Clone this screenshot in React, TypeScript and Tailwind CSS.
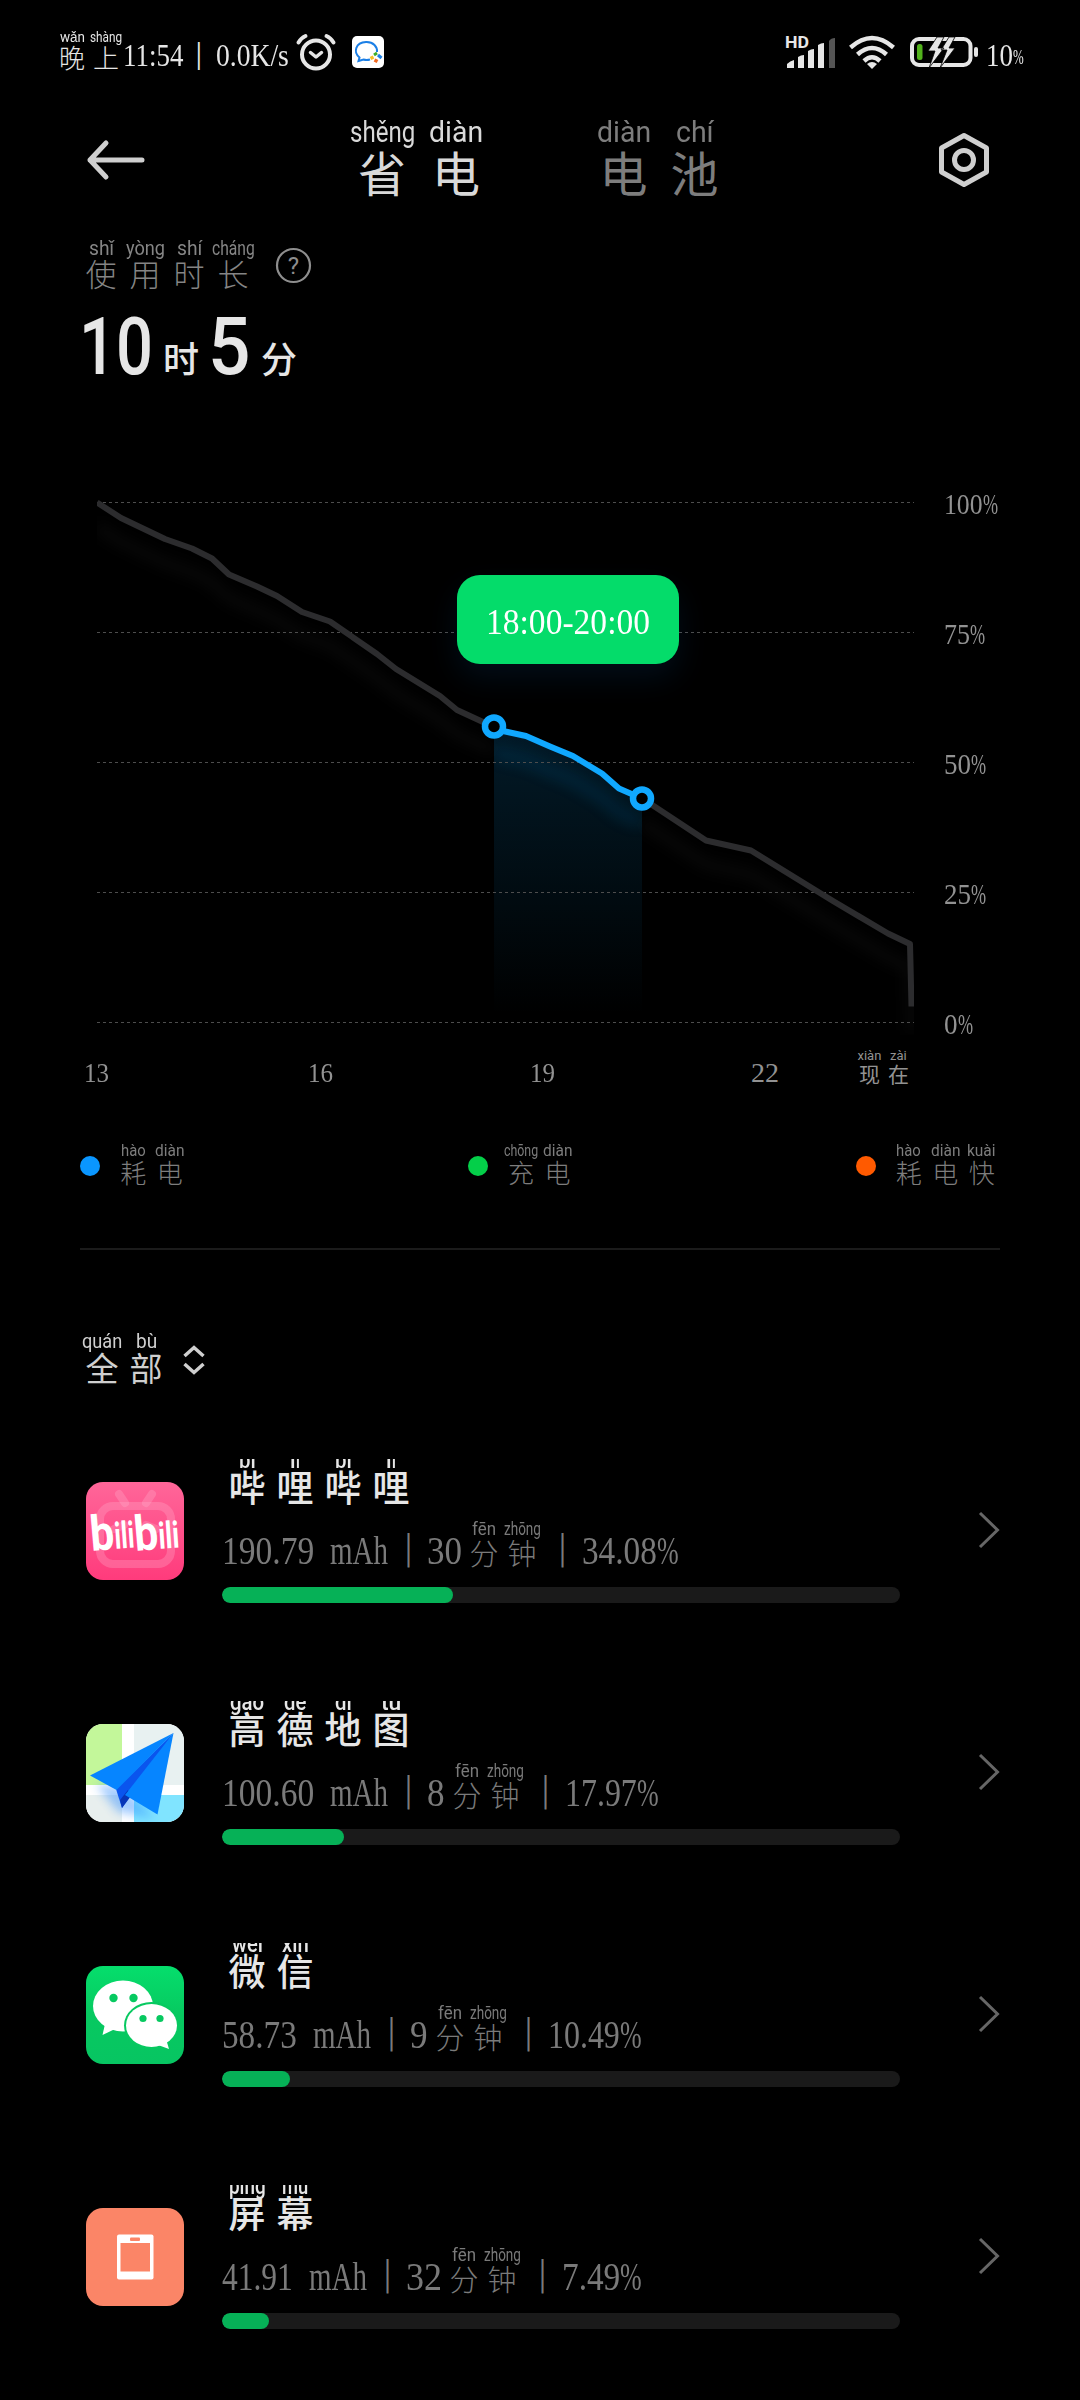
import React, { useLayoutEffect, useRef, useState } from 'react';
import clsx from 'clsx';

const SERIF = "font-['Liberation_Serif',serif]";
const LATIN = "font-['Roboto',sans-serif]";
const HAN = "font-['Noto_Sans_CJK_SC',sans-serif]";

interface FitProps {
  width: number;
  className?: string;
  children: React.ReactNode;
}

// Condenses or stretches a single line of text to the given width
const Fit: React.FC<FitProps> = ({ width, className, children }) => {
  const ref = useRef<HTMLSpanElement>(null);
  const [scale, setScale] = useState(1);

  useLayoutEffect(() => {
    if (ref.current && ref.current.offsetWidth > 0) {
      setScale(width / ref.current.offsetWidth);
    }
  }, [width, children]);

  return (
    <span className={clsx('flex shrink-0 justify-start', className)} style={{ width }}>
      <span ref={ref} className="shrink-0 origin-left whitespace-pre" style={{ transform: `scaleX(${scale})` }}>
        {children}
      </span>
    </span>
  );
};

type Syllable = [pinyin: string, width: number, hanzi: string];

interface RubyProps {
  text: Syllable[];
  cell: string;
  pinyin: string;
  hanzi: string;
  className?: string;
}

const Ruby: React.FC<RubyProps> = ({ text, cell, pinyin, hanzi, className }) => (
  <div className={clsx('flex shrink-0', className)}>
    {text.map(([sound, width, char], i) => (
      <div key={i} className={clsx('flex flex-col items-center', cell)}>
        <Fit width={width} className={clsx(LATIN, pinyin)}>{sound}</Fit>
        <span className={clsx(HAN, hanzi)}>{char}</span>
      </div>
    ))}
  </div>
);

const StatusBar = () => (
  <div className="flex h-[100px] shrink-0 items-start pl-[55px] pr-[56px] text-[#e6e6e6]">
    <Ruby
      className="mt-[30px]"
      cell="w-[34px]"
      pinyin="text-[14px] leading-[14px]"
      hanzi="text-[26px] leading-[26px] font-light"
      text={[['wǎn', 25, '晚'], ['shàng', 32, '上']]}
    />
    <Fit width={60} className={clsx(SERIF, 'mt-[40px] text-[31px] leading-[31px]')}>11:54</Fit>
    <span className={clsx(LATIN, 'ml-[12px] mt-[37px] w-[8px] text-[34px] leading-[34px] font-light')}>|</span>
    <Fit width={73} className={clsx(SERIF, 'ml-[13px] mt-[40px] text-[31px] leading-[31px]')}>0.0K/s</Fit>
    <svg className="ml-[7px] mt-[33px]" width="40" height="38" viewBox="0 0 40 38" fill="none" stroke="#e6e6e6" strokeLinecap="round">
      <circle cx="20" cy="21.5" r="14" strokeWidth="4" />
      <path d="M14.5 19.5l5.5 4.5 5.500-4.500" strokeWidth="3.500" strokeLinejoin="round" />
      <path d="M2.500 9.500Q5 5 9.500 3M37.500 9.500Q35 5 30.500 3" strokeWidth="3.800" />
    </svg>
    <svg className="ml-[16px] mt-[36px]" width="32" height="32" viewBox="0 0 32 32" fill="none">
      <rect width="32" height="32" rx="5" fill="#fff" />
      <path d="M18 23.500q-3.500 1-6.500 0l-5 1.500 1-3.500C1 16 3.500 6.500 14 6c7.500-.3 11.500 5 11 10" stroke="#1b7fe6" strokeWidth="2" />
      <path d="M22 19l3-2" stroke="#3fae2a" strokeWidth="3" />
      <path d="M26 19l3.500 3" stroke="#1b7fe6" strokeWidth="3" />
      <path d="M25.500 25.500l-3-1.500" stroke="#f26a21" strokeWidth="3.500" />
      <path d="M18.500 22.500l3-1.500" stroke="#f7bf26" strokeWidth="3.500" />
    </svg>

    <svg className={clsx(LATIN, 'ml-auto mt-[32px]')} width="52" height="38" viewBox="0 0 52 38" fill="#e6e6e6">
      <text x="1" y="16" fontSize="16" fontWeight="700" textLength="24" lengthAdjust="spacingAndGlyphs">HD</text>
      <path d="M3 36v-4q3-3 7-4v8zM14 36V25q3-2 6-2v13zM24 36V19q3-2 6-2v19zM34 36V13q3-2 6-2v25z" />
      <path d="M45 36V9q2-3 6-3v30z" fill="#555" />
    </svg>
    <svg className="ml-[12px] mt-[35px]" width="48" height="35" viewBox="0 0 48 35" fill="none" stroke="#e6e6e6" strokeWidth="4.500">
      <path d="M2.500 12.500Q24-6.500 45.500 12.500" />
      <path d="M9.500 19.500Q24 6.500 38.500 19.500" />
      <path d="M16 26Q24 18.500 32 26" />
      <path d="M19 29q5-4 10 0l-5 5z" fill="#e6e6e6" stroke="none" />
    </svg>
    <svg className="ml-[14px] mt-[36px]" width="69" height="32" viewBox="0 0 69 32" fill="none">
      <rect x="2" y="3" width="58.500" height="26" rx="7" stroke="#e6e6e6" strokeWidth="4" />
      <rect x="7" y="8" width="5.500" height="16" rx="2.500" fill="#52b31c" />
      <path d="M27 1L18 15h7l-6 17L34 12h-6l6-11zM39 1l-8 13h6l-7 18 15-20h-6l6-11z" fill="#e6e6e6" stroke="#000" strokeWidth="0.800" />
      <rect x="64" y="11" width="4" height="10" rx="2" fill="#e6e6e6" />
    </svg>
    <Fit width={27} className={clsx(SERIF, 'ml-[7px] mt-[40px] text-[31px] leading-[31px]')}>10</Fit>
    <Fit width={11} className={clsx(SERIF, 'mt-[47px] text-[21px] leading-[21px]')}>%</Fit>
  </div>
);

const Header = () => (
  <div className="flex h-[138px] shrink-0 items-start pl-[83px] pr-[88px]">
    <svg className="mt-[38px]" width="62" height="44" viewBox="0 0 62 44" fill="none" stroke="#cfcfcf" strokeWidth="5" strokeLinecap="round" strokeLinejoin="round">
      <path d="M23 5L7 22l16 17M7 22h52" />
    </svg>
    <Ruby
      className="ml-[200px] mt-[17px] text-[#d9d9d9]"
      cell="w-[74px]"
      pinyin="text-[30px] leading-[30px] h-[30px]"
      hanzi="text-[48px] leading-[48px]"
      text={[['shěng', 65, '省'], ['diàn', 54, '电']]}
    />
    <Ruby
      className="ml-[95px] mt-[17px] text-[#7d7d7d]"
      cell="w-[71px]"
      pinyin="text-[30px] leading-[30px] h-[30px]"
      hanzi="text-[48px] leading-[48px]"
      text={[['diàn', 54, '电'], ['chí', 38, '池']]}
    />
    <svg className="ml-auto mt-[31px]" width="56" height="58" viewBox="0 0 56 58" fill="none" stroke="#cfcfcf" strokeWidth="5">
      <path d="M28 4.500L50.500 17v24L28 53.500 5.500 41V17z" strokeLinejoin="round" />
      <circle cx="28" cy="29" r="9.500" />
    </svg>
  </div>
);

const Usage = () => (
  <div className="flex h-[252px] shrink-0 flex-col pl-[79px] text-[#e6e6e6]">
    <div className="flex items-start text-[#858585]">
      <Ruby
        cell="w-[44px]"
        pinyin="text-[20px] leading-[20px] h-[19px]"
        hanzi="text-[31px] leading-[31px] font-light"
        text={[['shǐ', 25, '使'], ['yòng', 39, '用'], ['shí', 25, '时'], ['cháng', 43, '长']]}
      />
      <svg className={clsx(LATIN, 'ml-[20px] mt-[9px]')} width="37" height="37" viewBox="0 0 37 37" fill="none">
        <circle cx="18.500" cy="18.500" r="16.500" stroke="#8e8e8e" strokeWidth="2.200" />
        <text x="18.500" y="27" fontSize="24" textAnchor="middle" fill="#8e8e8e">?</text>
      </svg>
    </div>
    <div className="mt-[19px] flex items-end">
      <Fit width={74} className={clsx(LATIN, 'text-[80px] leading-[80px] font-medium')}>10</Fit>
      <span className={clsx(HAN, 'mb-[12px] ml-[10px] text-[36px] leading-[36px] font-medium')}>时</span>
      <Fit width={42} className={clsx(LATIN, 'ml-[9px] text-[80px] leading-[80px] font-medium')}>5</Fit>
      <span className={clsx(HAN, 'mb-[12px] ml-[11px] text-[36px] leading-[36px] font-medium')}>分</span>
    </div>
  </div>
);

const GRID_Y = [502.5, 632.5, 762.5, 892.5, 1022.5];
const BEFORE = '97,502.5 121,518 165,539 192,548.5 212,558.5 229,574.5 257,586.5 277,596 302,612 330,621.5 377,654 396,669 440,696 457,710 483,722 494,726.5';
const SELECTED = '494,726.5 503,731 526,736 550,746.5 573,756 602,773.5 619,788.5 642,798.5';
const AFTER = '642,798.5 653,805.5 706,840.5 751,850.5 833,901 888,933.5 910,944 911.5,1006.5';

const LEVELS: [string, number][] = [['100', 39], ['75', 26], ['50', 27], ['25', 27], ['0', 14]];

const HOURS: [string, number, string][] = [
  ['13', 25, 'ml-[4px]'],
  ['16', 25, 'ml-[199px]'],
  ['19', 25, 'ml-[197px]'],
  ['22', 28, 'ml-[196px]'],
];

const BatteryChart = () => (
  <div className="flex h-[653px] shrink-0 flex-col pl-[80px]">
    <div className="relative flex h-[560px] items-start">
      <svg width="840" height="550" viewBox="80 490 840 550" fill="none">
        <defs>
          <linearGradient id="area" x1="0" y1="726" x2="0" y2="1015" gradientUnits="userSpaceOnUse">
            <stop offset="0" stopColor="#10a8ff" stopOpacity="0.160" />
            <stop offset="0.500" stopColor="#10a8ff" stopOpacity="0.080" />
            <stop offset="1" stopColor="#10a8ff" stopOpacity="0" />
          </linearGradient>
          <filter id="soft" x="-10%" y="-20%" width="120%" height="140%">
            <feGaussianBlur stdDeviation="7" />
          </filter>
          <clipPath id="plot"><rect x="97" y="490" width="817" height="545" /></clipPath>
          <clipPath id="range"><rect x="494" y="700" width="148" height="320" /></clipPath>
        </defs>
        <polygon points={`${SELECTED} 642,1015 494,1015`} fill="url(#area)" />
        <g clipPath="url(#plot)">
          <g filter="url(#soft)" stroke="#ffffff" strokeOpacity="0.040" strokeWidth="9">
            <polyline points={BEFORE} transform="translate(0 24)" />
            <polyline points={AFTER} transform="translate(0 24)" />
          </g>
        </g>
        <g clipPath="url(#range)">
          <polyline points={SELECTED} transform="translate(0 24)" stroke="#10a8ff" strokeOpacity="0.110" strokeWidth="12" filter="url(#soft)" />
        </g>
        {GRID_Y.map(y => (
          <line key={y} x1="97" x2="914" y1={y} y2={y} stroke="#4d4d4d" strokeWidth="1" strokeDasharray="3 3" />
        ))}
        <g clipPath="url(#plot)" strokeWidth="6" strokeLinejoin="round">
          <polyline points={BEFORE} stroke="#2c2c2e" />
          <polyline points={AFTER} stroke="#2c2c2e" />
          <polyline points={SELECTED} stroke="#10a8ff" />
        </g>
        <circle cx="494" cy="726.500" r="9" fill="#000" stroke="#10a8ff" strokeWidth="6.500" />
        <circle cx="642" cy="798.500" r="9" fill="#000" stroke="#10a8ff" strokeWidth="6.500" />
      </svg>
      <div className={clsx(SERIF, 'ml-[24px] flex h-[549px] flex-col justify-between text-[29px] leading-[29px] text-[#929292]')}>
        {LEVELS.map(([value, width]) => (
          <div key={value} className="flex">
            <Fit width={width}>{value}</Fit>
            <Fit width={15}>%</Fit>
          </div>
        ))}
      </div>
      <div className="absolute left-[377px] top-[85px] flex h-[89px] w-[222px] items-center justify-center rounded-[23px] bg-[#04dc6a] shadow-[0_14px_30px_rgba(16,110,200,0.120)]">
        <Fit width={164} className={clsx(SERIF, 'mt-[5px] text-[36px] leading-[36px] text-white')}>18:00-20:00</Fit>
      </div>
    </div>
    <div className="flex h-[34px] items-end text-[#929292]">
      {HOURS.map(([hour, width, margin]) => (
        <Fit key={hour} width={width} className={clsx(SERIF, margin, '-mb-[3px] text-[28px] leading-[28px]')}>{hour}</Fit>
      ))}
      <Ruby
        className="ml-[76px]"
        cell="w-[29px]"
        pinyin="text-[13px] leading-[12px] h-[13px]"
        hanzi="text-[21px] leading-[21px]"
        text={[['xiàn', 24, '现'], ['zài', 17, '在']]}
      />
    </div>
  </div>
);

const LEGEND: { color: string; text: Syllable[] }[] = [
  { color: 'bg-[#0a96ff]', text: [['hào', 25, '耗'], ['diàn', 29, '电']] },
  { color: 'bg-[#04cf49]', text: [['chōng', 34, '充'], ['diàn', 29, '电']] },
  { color: 'bg-[#ff5a00]', text: [['hào', 25, '耗'], ['diàn', 29, '电'], ['kuài', 29, '快']] },
];

const Legend = () => (
  <div className="mx-[80px] flex h-[107px] shrink-0 items-start justify-between border-b-2 border-[#1b1b1b]">
    {LEGEND.map(({ color, text }, i) => (
      <div key={i} className="flex items-start">
        <span className={clsx('mt-[13px] size-[20px] rounded-full', color)} />
        <Ruby
          className="ml-[15px] text-[#7d7d7d]"
          cell="w-[36.5px]"
          pinyin="text-[16px] leading-[16px]"
          hanzi="text-[26px] leading-[26px] font-light"
          text={text}
        />
      </div>
    ))}
  </div>
);

const Filter = () => (
  <div className="flex h-[128px] shrink-0 items-start pl-[80px] text-[#cfcfcf]">
    <Ruby
      cell="w-[44px]"
      pinyin="text-[20px] leading-[20px]"
      hanzi="text-[33px] leading-[33px]"
      text={[['quán', 40, '全'], ['bù', 21, '部']]}
    />
    <svg className="ml-[14px] mt-[13px]" width="24" height="32" viewBox="0 0 24 32" fill="none" stroke="#cfcfcf" strokeWidth="3.500">
      <path d="M2.500 12L12 3.500 21.500 12M2.500 20l9.500 8.500L21.500 20" />
    </svg>
  </div>
);

const BilibiliIcon = () => (
  <svg width="98" height="98" viewBox="0 0 98 98" fill="none">
    <defs>
      <linearGradient id="pink" x1="0" y1="0" x2="0" y2="1">
        <stop stopColor="#ff6699" />
        <stop offset="1" stopColor="#ff3b7c" />
      </linearGradient>
    </defs>
    <rect width="98" height="98" rx="17" fill="url(#pink)" />
    <g stroke="#ffb0cc" strokeOpacity="0.300" strokeWidth="8" strokeLinecap="round">
      <rect x="14" y="24" width="71" height="58" rx="13" />
      <path d="M33 12l6 9M66 12l-6 9M28 47l10-4M60 43l10 4" />
    </g>
    {/* the b towers over the short letters of each half */}
    <g className={LATIN} fill="#fff" fontWeight="700">
      <text x="4" y="68" fontSize="49" textLength="24" lengthAdjust="spacingAndGlyphs" transform="rotate(-5 16 50)">b</text>
      <text x="28" y="66" fontSize="37" textLength="20" lengthAdjust="spacingAndGlyphs" transform="rotate(-4 38 50)">ili</text>
      <text x="48" y="68" fontSize="49" textLength="24" lengthAdjust="spacingAndGlyphs" transform="rotate(-5 60 50)">b</text>
      <text x="72" y="66" fontSize="37" textLength="21" lengthAdjust="spacingAndGlyphs" transform="rotate(-4 82 50)">ili</text>
    </g>
  </svg>
);

const AmapIcon = () => (
  <svg width="98" height="98" viewBox="0 0 98 98">
    <defs>
      <clipPath id="tile"><rect width="98" height="98" rx="17" /></clipPath>
      <filter id="planeShadow"><feGaussianBlur stdDeviation="5" /></filter>
    </defs>
    <g clipPath="url(#tile)">
      <rect width="98" height="98" fill="#fff" />
      <rect width="36" height="61" fill="#c3f79a" />
      <rect x="48" width="50" height="61" fill="#e8f1f1" />
      <rect y="71" width="36" height="27" fill="#e8efee" />
      <rect x="48" y="71" width="50" height="27" fill="#80e4ff" />
      <path d="M10 60l22 28 36 6-28-30z" fill="#2f8cff" opacity="0.450" filter="url(#planeShadow)" />
      <path d="M87.500 9L36 84l-6-19z" fill="#0a55ee" />
      <path d="M36 84l-2-8 8-10 3 6z" fill="#0735b8" />
      <path d="M87.500 9L4 51.500 30.500 66z" fill="#0685ff" />
      <path d="M87.500 9L39 71l32.500 19.500z" fill="#0685ff" />
    </g>
  </svg>
);

const WechatIcon = () => (
  <svg width="98" height="98" viewBox="0 0 98 98">
    <defs>
      <linearGradient id="green" x1="0" y1="0" x2="0" y2="1">
        <stop stopColor="#05de6c" />
        <stop offset="0.500" stopColor="#07c960" />
        <stop offset="1" stopColor="#07c562" />
      </linearGradient>
    </defs>
    <rect width="98" height="98" rx="17" fill="url(#green)" />
    <ellipse cx="37" cy="40" rx="30" ry="25.500" fill="#fff" />
    <path d="M19 58l-2.500 11L29 63z" fill="#fff" />
    <ellipse cx="65.500" cy="59.500" rx="27.500" ry="23.500" fill="#07c960" />
    <ellipse cx="65.500" cy="59.500" rx="25.500" ry="21.500" fill="#fff" />
    <path d="M72 79l11 4-3-10z" fill="#fff" />
    <g fill="#07c960">
      <circle cx="27.500" cy="32" r="4.200" />
      <circle cx="47.500" cy="32" r="4.200" />
      <circle cx="57" cy="52.500" r="3.600" />
      <circle cx="74" cy="52.500" r="3.600" />
    </g>
  </svg>
);

const ScreenIcon = () => (
  <svg width="98" height="98" viewBox="0 0 98 98">
    <rect width="98" height="98" rx="17" fill="#fb8567" />
    <rect x="31" y="26.500" width="36.500" height="45" rx="2" fill="#fff" />
    <rect x="34.500" y="35" width="29.500" height="28.500" fill="#fb8567" />
    <rect x="44" y="29.500" width="10" height="3.500" rx="1" fill="#fb8567" />
  </svg>
);

interface AppUsage {
  icon: React.ReactNode;
  name: Syllable[];
  amount: [string, number];
  minutes: [string, number];
  share: [string, number];
}

const APPS: AppUsage[] = [
  {
    icon: <BilibiliIcon />,
    name: [['bì', 17, '哔'], ['lǐ', 10, '哩'], ['bì', 17, '哔'], ['lǐ', 10, '哩']],
    amount: ['190.79', 92],
    minutes: ['30', 35],
    share: ['34.08', 75],
  },
  {
    icon: <AmapIcon />,
    name: [['gāo', 34, '高'], ['dé', 22, '德'], ['dì', 17, '地'], ['tú', 20, '图']],
    amount: ['100.60', 92],
    minutes: ['8', 18],
    share: ['17.97', 72],
  },
  {
    icon: <WechatIcon />,
    name: [['wēi', 31, '微'], ['xìn', 27, '信']],
    amount: ['58.73', 75],
    minutes: ['9', 18],
    share: ['10.49', 72],
  },
  {
    icon: <ScreenIcon />,
    name: [['píng', 37, '屏'], ['mù', 26, '幕']],
    amount: ['41.91', 71],
    minutes: ['32', 36],
    share: ['7.49', 58],
  },
];

const Divider = ({ className }: { className: string }) => (
  <span className={clsx(LATIN, className, '-mb-[2px] w-[10px] text-[40px] leading-[40px] font-light')}>|</span>
);

const AppRow: React.FC<{ app: AppUsage }> = ({ app }) => {
  const digits = clsx(SERIF, '-mb-[3px] text-[39px] leading-[39px]');

  return (
    <div className="flex h-[242px] shrink-0 items-start pl-[86px] pr-[80px]">
      <div className="mt-[23px] shrink-0">{app.icon}</div>
      <div className="ml-[38px] flex w-[678px] flex-col">
        {/* the name line is shorter than its pinyin, which gets cut off */}
        <div className="h-[52px] overflow-hidden pl-px">
          <Ruby
            className="-mt-[11px] text-[#e6e6e6]"
            cell="w-[48px]"
            pinyin="text-[24px] leading-[24px] h-[20px] font-medium"
            hanzi="text-[37px] leading-[37px] font-medium"
            text={app.name}
          />
        </div>
        <div className="flex h-[56px] items-end text-[#7a7a7a]">
          <Fit width={app.amount[1]} className={digits}>{app.amount[0]}</Fit>
          <Fit width={58} className={clsx(digits, 'ml-[16px]')}>mAh</Fit>
          <Divider className="ml-[16px]" />
          <Fit width={app.minutes[1]} className={clsx(digits, 'ml-[13px]')}>{app.minutes[0]}</Fit>
          <Ruby
            className="ml-[3px]"
            cell="w-[38px]"
            pinyin="text-[19px] leading-[19px]"
            hanzi="text-[29px] leading-[29px] font-light"
            text={[['fēn', 24, '分'], ['zhōng', 37, '钟']]}
          />
          <Divider className="ml-[17px]" />
          <Fit width={app.share[1]} className={clsx(digits, 'ml-[14px]')}>{app.share[0]}</Fit>
          <Fit width={22} className={digits}>%</Fit>
        </div>
        <div className="mt-[20px] h-[16px] overflow-hidden rounded-full bg-[#1a1a1a]">
          <div className="h-full rounded-full bg-[#06b157]" style={{ width: `${Math.round(Number(app.share[0]))}%` }} />
        </div>
      </div>
      <svg className="ml-auto mt-[52px]" width="22" height="38" viewBox="0 0 22 38" fill="none" stroke="#666" strokeWidth="3">
        <path d="M2 2l17.500 17L2 36" />
      </svg>
    </div>
  );
};

const App = () => (
  <div className="flex h-[2400px] w-[1080px] flex-col overflow-hidden bg-black">
    <StatusBar />
    <Header />
    <Usage />
    <BatteryChart />
    <Legend />
    <div className="h-[81px] shrink-0" />
    <Filter />
    {APPS.map((app, i) => (
      <AppRow key={i} app={app} />
    ))}
  </div>
);

export default App;
